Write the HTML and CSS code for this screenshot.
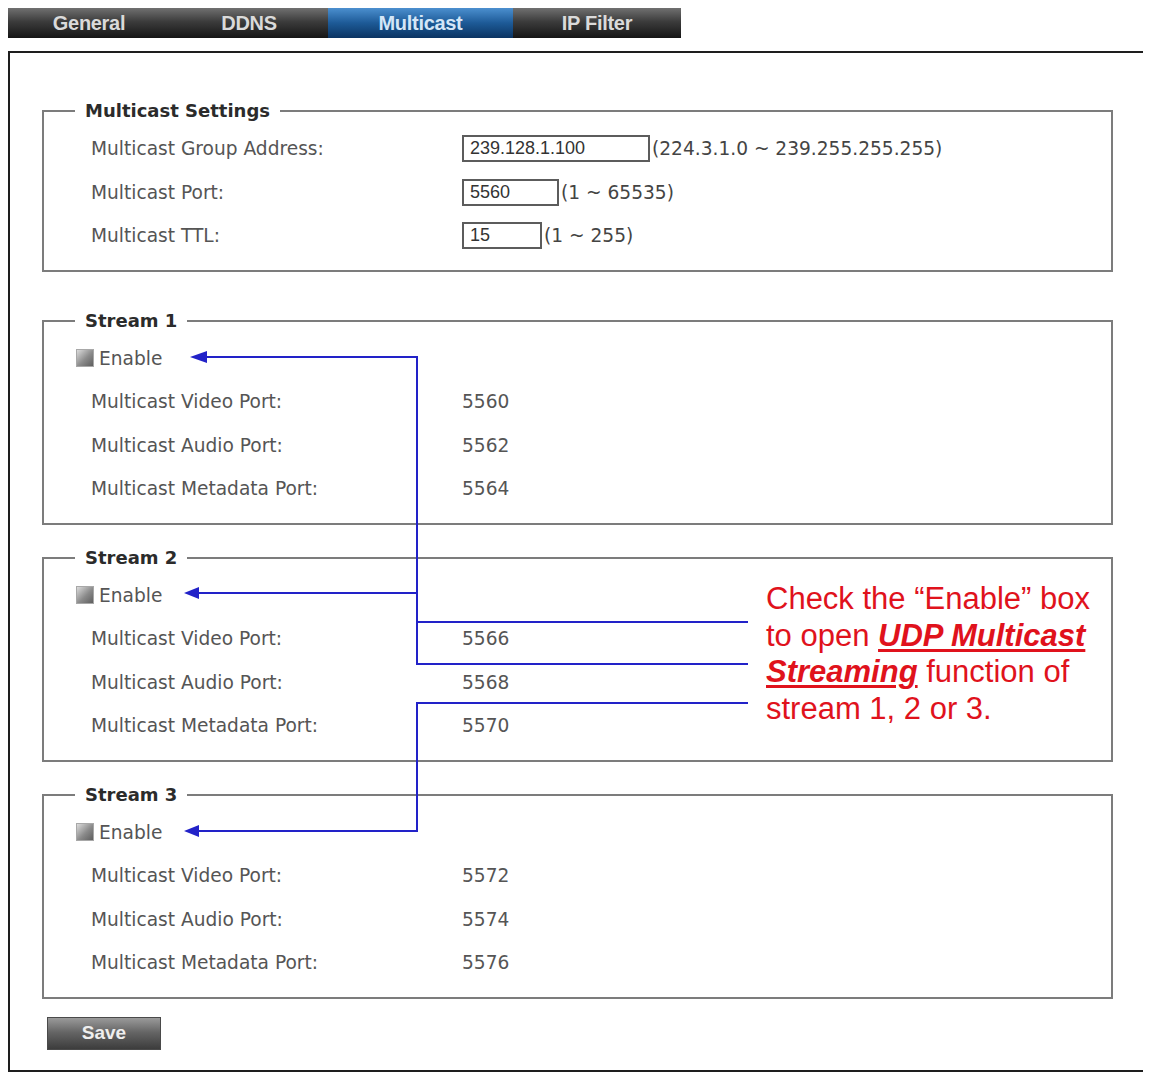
FILE: index.html
```html
<!DOCTYPE html>
<html lang="en">
<head>
  <meta charset="UTF-8" />
  <title>Multicast</title>
  <link rel="stylesheet" href="styles.css">
</head>
<body>

<div class="tabs">
  <a class="tab tab-general">General</a>
  <a class="tab tab-ddns">DDNS</a>
  <a class="tab tab-multicast active">Multicast</a>
  <a class="tab tab-ipfilter">IP Filter</a>
</div>

<div class="panel">
  <fieldset class="group settings">
    <legend>Multicast Settings</legend>
    <div class="row">
      <span class="label">Multicast Group Address:</span>
      <input class="field field-ip" type="text" value="239.128.1.100">
      <span class="hint">(224.3.1.0 ~ 239.255.255.255)</span>
    </div>
    <div class="row">
      <span class="label">Multicast Port:</span>
      <input class="field field-port" type="text" value="5560">
      <span class="hint">(1 ~ 65535)</span>
    </div>
    <div class="row">
      <span class="label">Multicast TTL:</span>
      <input class="field field-ttl" type="text" value="15">
      <span class="hint">(1 ~ 255)</span>
    </div>
  </fieldset>

  <fieldset class="group stream">
    <legend>Stream 1</legend>
    <label class="row enable"><span class="check"></span>Enable</label>
    <div class="row"><span class="label">Multicast Video Port:</span><span class="value">5560</span></div>
    <div class="row"><span class="label">Multicast Audio Port:</span><span class="value">5562</span></div>
    <div class="row"><span class="label">Multicast Metadata Port:</span><span class="value">5564</span></div>
  </fieldset>

  <fieldset class="group stream">
    <legend>Stream 2</legend>
    <label class="row enable"><span class="check"></span>Enable</label>
    <div class="row"><span class="label">Multicast Video Port:</span><span class="value">5566</span></div>
    <div class="row"><span class="label">Multicast Audio Port:</span><span class="value">5568</span></div>
    <div class="row"><span class="label">Multicast Metadata Port:</span><span class="value">5570</span></div>
  </fieldset>

  <fieldset class="group stream">
    <legend>Stream 3</legend>
    <label class="row enable"><span class="check"></span>Enable</label>
    <div class="row"><span class="label">Multicast Video Port:</span><span class="value">5572</span></div>
    <div class="row"><span class="label">Multicast Audio Port:</span><span class="value">5574</span></div>
    <div class="row"><span class="label">Multicast Metadata Port:</span><span class="value">5576</span></div>
  </fieldset>

  <button class="save">Save</button>

  <!-- callout arrows pointing at the Enable boxes -->
  <svg class="callout" width="1134" height="1016" viewBox="10 53 1134 1016">
    <g fill="none" stroke="#2222c8" stroke-width="2">
      <path d="M206 357 H417 V664 H748" />
      <path d="M417 622 H748" />
      <path d="M198 593 H417" />
      <path d="M748 703 H417 V831 H198" />
    </g>
    <g fill="#2222c8">
      <polygon points="190,357 207,351 207,363" />
      <polygon points="184,593 199,587 199,599" />
      <polygon points="184,831 199,825 199,837" />
    </g>
  </svg>

  <p class="note">
    Check the “Enable” box<br>
    to open <em>UDP Multicast</em><br>
    <em>Streaming</em> function of<br>
    stream 1, 2 or 3.
  </p>
</div>

</body>
</html>
```

FILE: styles.css
```css
body {
  margin: 8px;
  font-family: "DejaVu Sans", Verdana, sans-serif;
  background: #fff;
}

/* top tab bar */
.tabs {
  display: flex;
  width: 673px;
  height: 30px;
  background: linear-gradient(#707070, #3c3c3c 45%, #151515);
}

.tab {
  display: flex;
  align-items: center;
  justify-content: center;
  font: bold 20px "Liberation Sans", Arial, sans-serif;
  color: #dadada;
  text-decoration: none;
  letter-spacing: -0.3px;
}

.tab-general { width: 162px; }
.tab-ddns { width: 158px; }
.tab-multicast { width: 185px; }
.tab-ipfilter { width: 168px; }

.tab.active {
  background: linear-gradient(#4b8fcf, #1d5a97 50%, #0b3462);
  color: #d4e6f7;
}

/* main panel */
.panel {
  position: relative;
  margin-top: 13px;
  width: 1138px;
  box-sizing: border-box;
  border: 2px solid #1e1e1e;
  padding: 46px 31px 20px 32px;
}

.group {
  margin: 0;
  min-width: 0;
  border: 2px solid #7c7c7c;
  padding: 4px 0 12px;
}

.stream {
  margin-top: 21px;
}

.settings + .stream {
  margin-top: 37px;
}

legend {
  margin-left: 31px;
  padding: 0 10px;
  font-size: 18px;
  font-weight: bold;
  line-height: 24px;
  color: #2b2b2b;
}

.row {
  display: flex;
  align-items: center;
  height: 43.5px;
  padding-left: 47px;
  font-size: 18.6px;
  color: #555;
}

.label {
  flex: none;
  width: 371px;
}

.value {
  color: #555;
}

.field {
  box-sizing: border-box;
  height: 27px;
  margin: 0;
  padding: 0 6px;
  border: 2px solid #5c5c5c;
  font: 18px "Liberation Sans", Arial, sans-serif;
  color: #333;
  background: #fff;
}

.field-ip { width: 188px; }
.field-port { width: 97px; }
.field-ttl { width: 80px; }

.hint {
  margin-left: 2px;
  color: #444;
}

.enable {
  padding-left: 32px;
}

.check {
  width: 16px;
  height: 16px;
  margin-right: 5px;
  border: 1px solid #a8a8a8;
  background: linear-gradient(135deg, #dcdcdc, #8a8a8a 55%, #5e5e5e);
}

.save {
  display: block;
  margin: 18px 0 0 5px;
  width: 114px;
  height: 33px;
  border: 1px solid #4a4a4a;
  background: linear-gradient(#9a9a9a, #666 45%, #3c3c3c);
  font: bold 19px "Liberation Sans", Arial, sans-serif;
  color: #eee;
}

/* annotation overlay */
.callout {
  position: absolute;
  top: 0;
  left: 0;
  pointer-events: none;
}

.note {
  position: absolute;
  left: 756px;
  top: 528px;
  margin: 0;
  font: 31px/36.5px "Liberation Sans", Arial, sans-serif;
  color: #e0121c;
  white-space: nowrap;
}

.note em {
  font-weight: bold;
  font-style: italic;
  text-decoration: underline;
  text-decoration-thickness: 3px;
  text-underline-offset: 3px;
}
```
